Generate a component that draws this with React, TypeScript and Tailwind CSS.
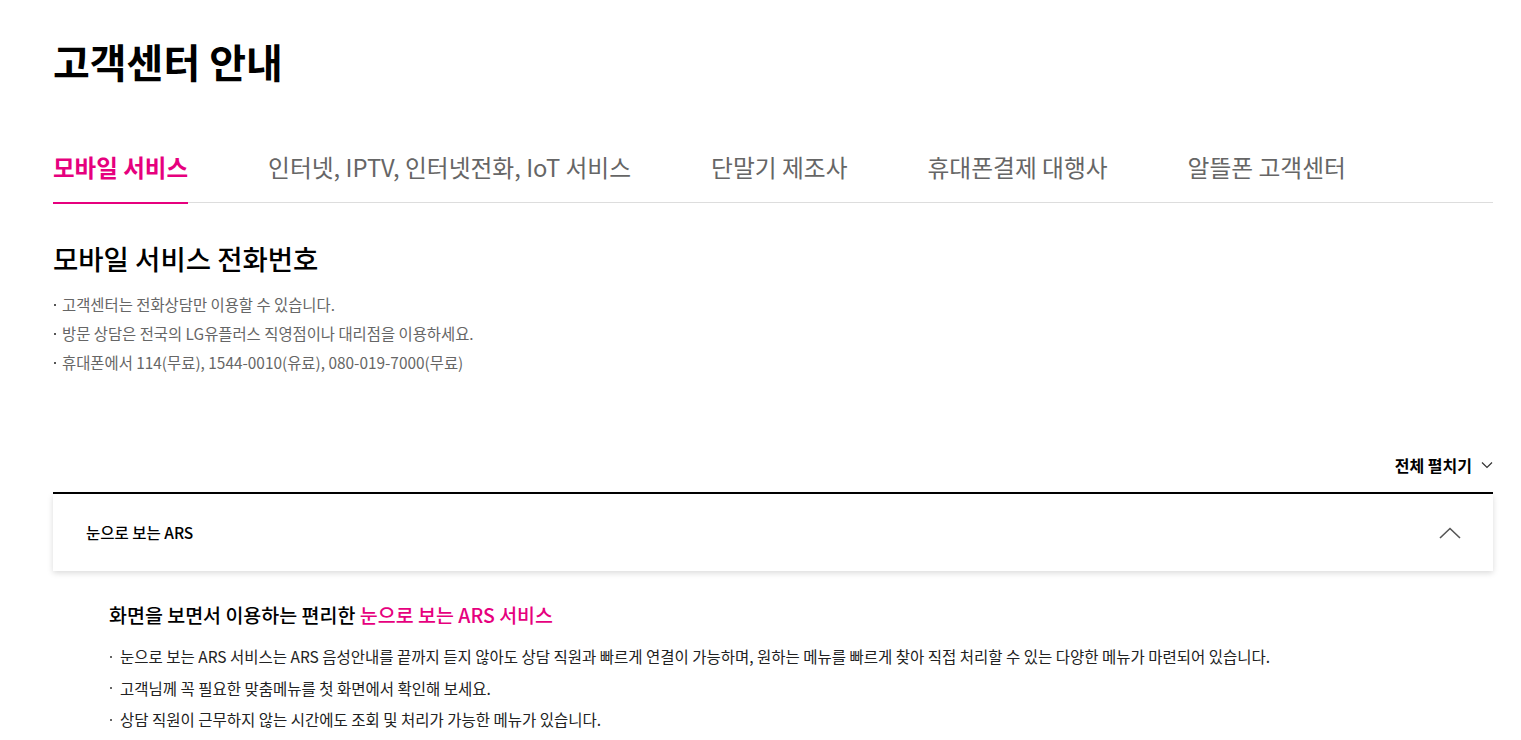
import React from "react";

const tabs = [
  "모바일 서비스",
  "인터넷, IPTV, 인터넷전화, IoT 서비스",
  "단말기 제조사",
  "휴대폰결제 대행사",
  "알뜰폰 고객센터",
];

export default function App() {
  return (
    <div
      className="w-full bg-white text-[#111]"
      style={{ fontFamily: '"Noto Sans CJK KR", "Noto Sans", sans-serif' }}
    >
      <div className="ml-[53px] w-[1440px] pb-10">
        <h1 className="pt-[35px] text-[40px] leading-[52px] font-bold text-black">
          고객센터 안내
        </h1>

        <ul className="mt-[64px] flex gap-[80px] border-b border-[#dddddd]">
          {tabs.map((t, i) => (
            <li
              key={t}
              className={
                i === 0
                  ? "relative pb-[19px] text-[23.5px] leading-[32px] font-bold text-[#e6007e]"
                  : "relative pb-[19px] text-[23.75px] leading-[32px] text-[#666666]"
              }
            >
              {t}
              {i === 0 && (
                <span className="absolute left-0 right-0 bottom-[-2px] h-[2px] bg-[#e6007e]" />
              )}
            </li>
          ))}
        </ul>

        <h2 className="mt-[37px] text-[27.5px] leading-[36px] font-medium text-black">
          모바일 서비스 전화번호
        </h2>
        <ul className="mt-[14px] text-[15.4px] leading-[29px] text-[#666666]">
          {[
            "고객센터는 전화상담만 이용할 수 있습니다.",
            "방문 상담은 전국의 LG유플러스 직영점이나 대리점을 이용하세요.",
            "휴대폰에서 114(무료), 1544-0010(유료), 080-019-7000(무료)",
          ].map((s) => (
            <li key={s} className="flex items-center">
              <span className="ml-[1px] mr-[6px] inline-block h-[2px] w-[2px] bg-[#555555]" />
              {s}
            </li>
          ))}
        </ul>

        <div className="mt-[77px] flex justify-end">
          <button className="flex items-center gap-[9px] text-[16px] leading-[22px] font-bold text-black">
            전체 펼치기
            <svg width="12" height="8" viewBox="0 0 12 8" fill="none">
              <path d="M1 1.5L6 6.5L11 1.5" stroke="#333" strokeWidth="1.2" />
            </svg>
          </button>
        </div>

        <div className="mt-[16px] h-[2px] bg-black" />
        <div className="flex h-[77px] items-center justify-between bg-white pl-[33px] pr-[32px] shadow-[0_2px_6px_rgba(0,0,0,0.15)]">
          <span className="text-[15.5px] font-medium text-black">눈으로 보는 ARS</span>
          <svg width="22" height="12" viewBox="0 0 22 12" fill="none">
            <path d="M1 11L11 1.5L21 11" stroke="#555" strokeWidth="1.6" />
          </svg>
        </div>

        <div className="pl-[56px]">
          <h3 className="mt-[30px] text-[19.5px] leading-[28px] font-medium text-black">
            화면을 보면서 이용하는 편리한{" "}
            <span className="text-[#e6007e]">눈으로 보는 ARS 서비스</span>
          </h3>
          <ul className="mt-[12px] text-[15.5px] leading-[31.5px] text-[#222222]">
            {[
              "눈으로 보는 ARS 서비스는 ARS 음성안내를 끝까지 듣지 않아도 상담 직원과 빠르게 연결이 가능하며, 원하는 메뉴를 빠르게 찾아 직접 처리할 수 있는 다양한 메뉴가 마련되어 있습니다.",
              "고객님께 꼭 필요한 맞춤메뉴를 첫 화면에서 확인해 보세요.",
              "상담 직원이 근무하지 않는 시간에도 조회 및 처리가 가능한 메뉴가 있습니다.",
            ].map((s) => (
              <li key={s} className="flex items-center">
                <span className="ml-[1px] mr-[8px] inline-block h-[2px] w-[2px] bg-[#666666]" />
                {s}
              </li>
            ))}
          </ul>
        </div>
      </div>
    </div>
  );
}
